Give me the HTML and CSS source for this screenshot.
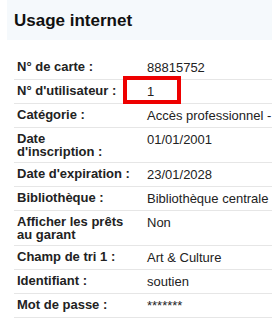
FILE: index.html
```html
<!DOCTYPE html>
<html lang="fr">
<head>
    <meta charset="UTF-8">
    <title>Usage internet</title>
    <link rel="stylesheet" href="styles.css">
</head>
<body>
    <div id="page">
        <div class="box-title">
            <h2>Usage internet</h2>
        </div>
        <div class="info-wrap">
            <table class="info">
                <tr><th>N° de carte&nbsp;:</th><td>88815752</td></tr>
                <tr><th>N° d'utilisateur&nbsp;:</th><td>1</td></tr>
                <tr><th>Catégorie&nbsp;:</th><td>Accès professionnel - Tarif réduit</td></tr>
                <tr><th>Date d'inscription&nbsp;:</th><td>01/01/2001</td></tr>
                <tr><th>Date d'expiration&nbsp;:</th><td>23/01/2028</td></tr>
                <tr><th>Bibliothèque&nbsp;:</th><td>Bibliothèque centrale</td></tr>
                <tr><th>Afficher les prêts au garant</th><td>Non</td></tr>
                <tr><th>Champ de tri 1&nbsp;:</th><td>Art &amp; Culture</td></tr>
                <tr><th>Identifiant&nbsp;:</th><td>soutien</td></tr>
                <tr><th>Mot de passe&nbsp;:</th><td>*******</td></tr>
            </table>
            <div class="mark"></div>
        </div>
    </div>
</body>
</html>
```
FILE: styles.css
```css
*{
    padding: 0;
    margin: 0;
    box-sizing: border-box;
}
html,body{
    overflow: hidden;
}
body{
    font-family: "Liberation Sans", Arial, sans-serif;
    color: #222;
    background: #fff;
}
#page{
    padding-left: 7px;
    width: 420px;
}
.box-title{
    height: 40px;
    background: #f5f9fc;
    padding: 11px 7px 0;
}
.box-title h2{
    font-size: 17px;
    line-height: 20px;
    font-weight: bold;
    color: #111;
}
.info-wrap{
    position: relative;
    margin: 16px 0 0 7px;
}
.info{
    border-collapse: collapse;
    width: 100%;
    font-size: 13px;
}
.info tr{
    border-bottom: 1px solid #e6e6e6;
}
.info th,.info td{
    padding: 4px 3px;
    text-align: left;
    vertical-align: top;
}
.info th{
    width: 130px;
    padding-right: 12px;
    font-weight: bold;
    line-height: 12.5px;
    padding-top: 5px;
}
.info td{
    line-height: 15px;
    white-space: nowrap;
}
.mark{
    position: absolute;
    left: 109px;
    top: 20px;
    width: 58px;
    height: 28px;
    border: 4px solid #ee0000;
}
```
